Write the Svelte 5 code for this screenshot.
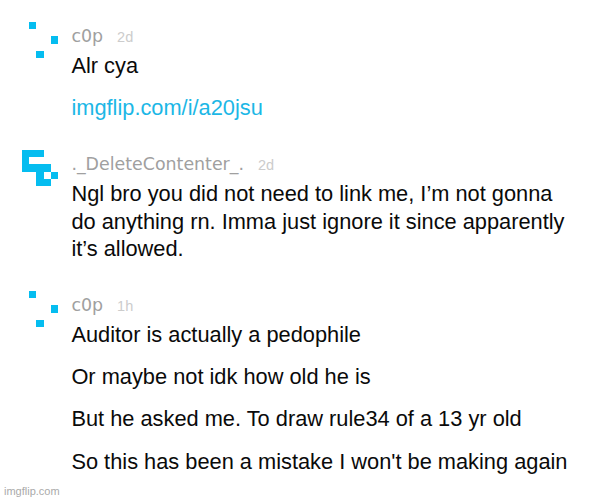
<script lang="ts">
    // each avatar is a 5x5 grid, cells are [column, row]
    const dots = [[1, 0], [4, 2], [2, 4]]
    const snake = [[0, 0], [1, 0], [2, 0], [0, 1], [0, 2], [1, 2], [2, 2], [3, 2], [2, 3], [4, 3], [2, 4], [3, 4]]

    const comments = [
        {
            user: 'c0p',
            time: '2d',
            avatar: dots,
            lines: [{ text: 'Alr cya' }, { text: 'imgflip.com/i/a20jsu', link: true }]
        },
        {
            user: '._DeleteContenter_.',
            time: '2d',
            avatar: snake,
            lines: [{ text: 'Ngl bro you did not need to link me, I’m not gonna do anything rn. Imma just ignore it since apparently it’s allowed.' }]
        },
        {
            user: 'c0p',
            time: '1h',
            avatar: dots,
            lines: [
                { text: 'Auditor is actually a pedophile' },
                { text: 'Or maybe not idk how old he is' },
                { text: 'But he asked me. To draw rule34 of a 13 yr old' },
                { text: "So this has been a mistake I won't be making again" }
            ]
        }
    ]
</script>

<main>
    <div class="comments">
        {#each comments as comment}
            <article>
                <svg class="avatar" viewBox="0 0 5 5" shape-rendering="crispEdges">
                    {#each comment.avatar as [x, y]}
                        <rect {x} {y} width="1" height="1" />
                    {/each}
                </svg>
                <div class="body">
                    <header>
                        <span class="user">{comment.user}</span>
                        <span class="time">{comment.time}</span>
                    </header>
                    {#each comment.lines as line}
                        <p class:link={line.link}>{line.text}</p>
                    {/each}
                </div>
            </article>
        {/each}
    </div>
    <footer>imgflip.com</footer>
</main>

<style>
    :global(body) {
        background: #fff;
    }
    main {
        display: flex;
        flex-direction: column;
        box-sizing: border-box;
        height: 500px;
        padding-top: 22px;
        overflow: hidden;
        font-family: "Liberation Sans", Arial, sans-serif;
    }
    .comments {
        display: flex;
        flex-direction: column;
        gap: 28.2px;
    }
    article {
        display: flex;
        gap: 13.4px;
        padding: 0 30px 0 22px;
    }
    .avatar {
        flex: none;
        width: 36px;
        height: 36px;
        fill: #05bdf0;
    }
    .body {
        flex: 1;
    }
    header {
        display: flex;
        align-items: baseline;
        gap: 14px;
        height: 30px;
        line-height: 28px;
    }
    .user {
        font-family: "DejaVu Sans", Verdana, sans-serif;
        font-size: 17.4px;
        color: #a0a0a0;
    }
    .time {
        font-size: 14.5px;
        color: #ccc;
    }
    p {
        margin: 0 0 14.4px;
        font-size: 21.8px;
        line-height: 27.7px;
        color: #0a0a0a;
    }
    p:last-child {
        margin-bottom: 0;
    }
    .link {
        color: #1cb7e6;
    }
    footer {
        margin-top: auto;
        padding: 0 0 2px 4px;
        font-size: 11px;
        line-height: 13px;
        color: #aaa;
    }
</style>
